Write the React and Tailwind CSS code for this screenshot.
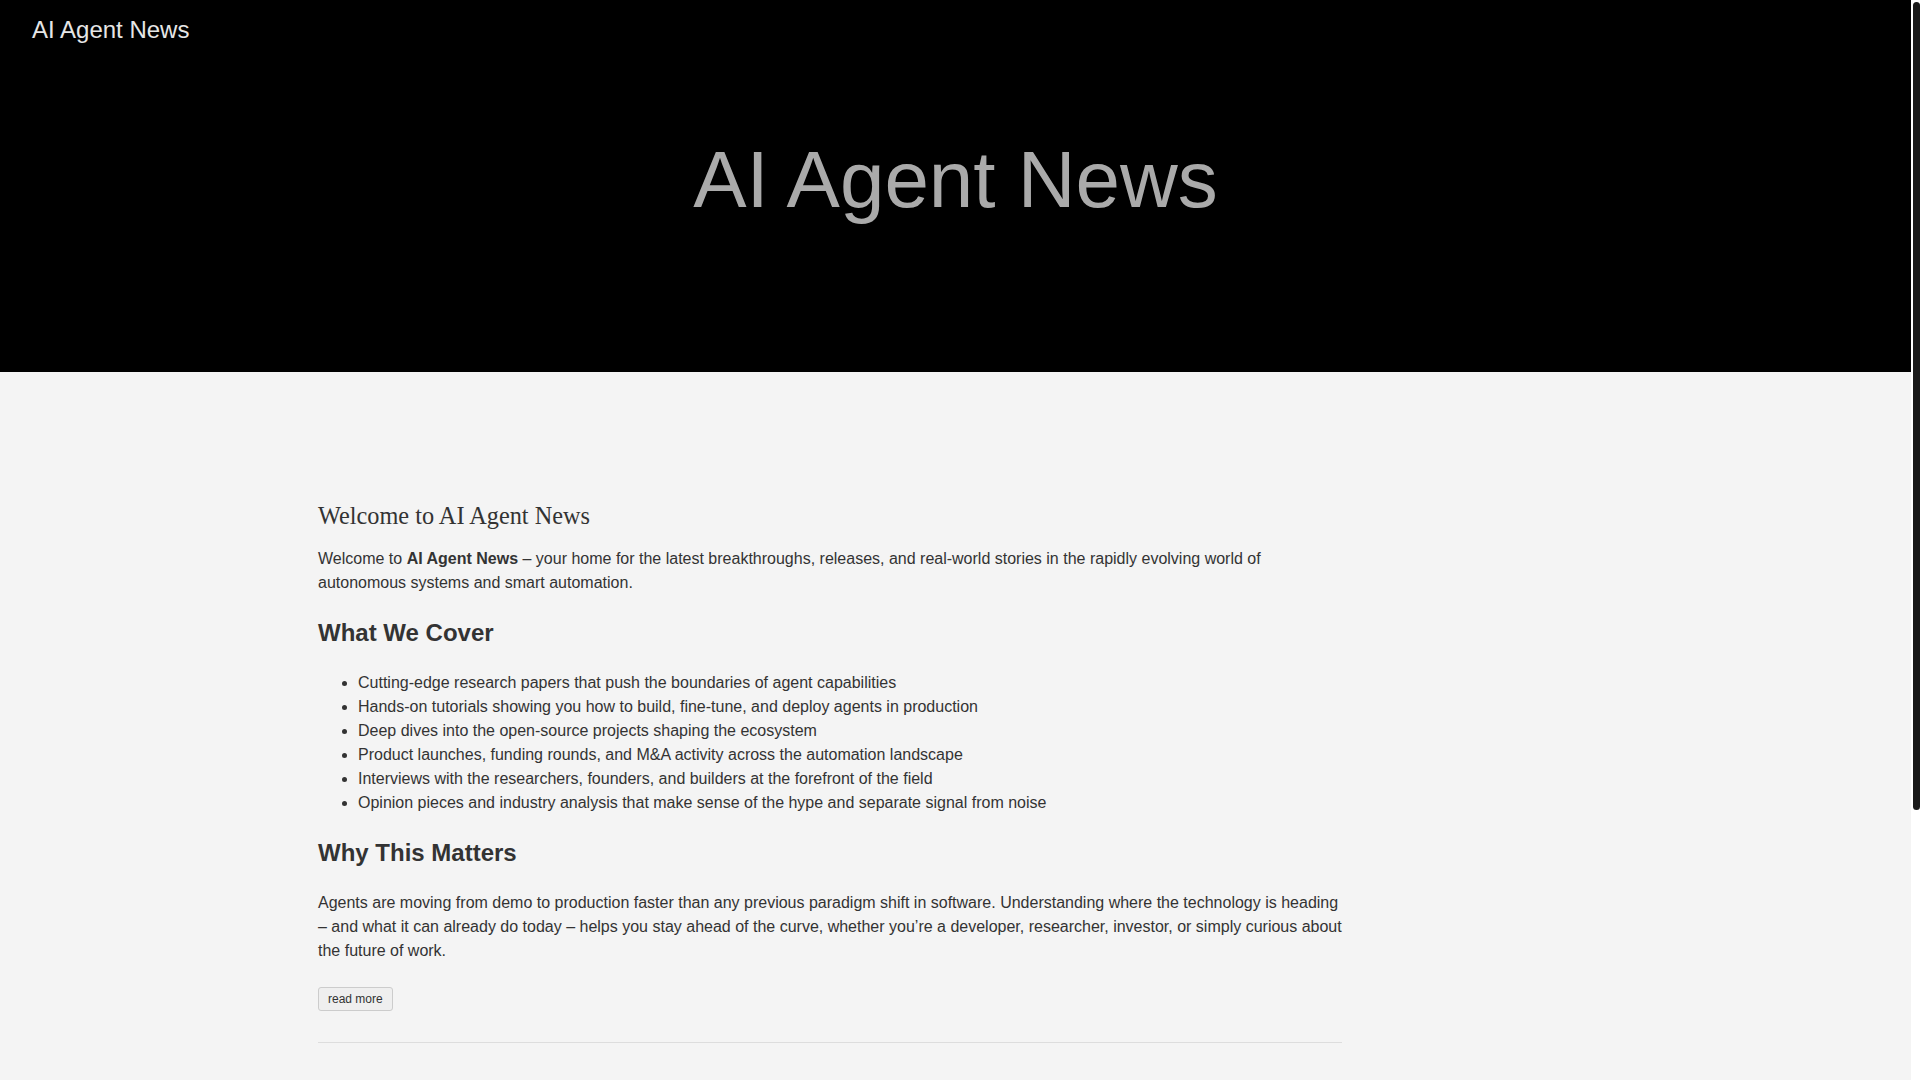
export default function App() {
  const covers = [
    "Cutting-edge research papers that push the boundaries of agent capabilities",
    "Hands-on tutorials showing you how to build, fine-tune, and deploy agents in production",
    "Deep dives into the open-source projects shaping the ecosystem",
    "Product launches, funding rounds, and M&A activity across the automation landscape",
    "Interviews with the researchers, founders, and builders at the forefront of the field",
    "Opinion pieces and industry analysis that make sense of the hype and separate signal from noise",
  ];

  return (
    <div className="flex h-screen font-['Liberation_Sans',Arial,sans-serif] text-[#333]">
      <div className="flex-1 overflow-y-auto bg-[#f4f4f4] [scrollbar-width:none]">
        <header className="h-[372px] bg-black">
          <nav className="px-8 pt-3">
            <a href="#" className="text-[24px] leading-[36px] text-[#e6e6e6]">
              AI Agent News
            </a>
          </nav>
          <h1 className="mt-[88px] text-center text-[80px] leading-[88px] text-[#aaa]">
            AI Agent News
          </h1>
        </header>

        <main className="pl-[318px] pt-[131px] pb-[400px]">
          <article className="w-[1024px]">
            <h3 className="font-['Liberation_Serif','Times_New_Roman',serif] text-[24.3px] leading-[26px] text-[#333]">
              Welcome to AI Agent News
            </h3>
            <p className="mt-[18px] text-[16px] leading-[24px]">
              Welcome to <strong className="font-bold">AI Agent News</strong> – your home for the latest
              breakthroughs, releases, and real-world stories in the rapidly evolving world of autonomous
              systems and smart automation.
            </p>

            <h2 className="mt-[24px] text-[24px] font-bold leading-[28px]">What We Cover</h2>
            <ul className="mt-[24px] list-disc pl-10 text-[16px] leading-[24px]">
              {covers.map((c) => (
                <li key={c}>{c}</li>
              ))}
            </ul>

            <h2 className="mt-[24px] text-[24px] font-bold leading-[28px]">Why This Matters</h2>
            <p className="mt-[24px] text-[16px] leading-[24px]">
              Agents are moving from demo to production faster than any previous paradigm shift in
              software. Understanding where the technology is heading – and what it can already do today –
              helps you stay ahead of the curve, whether you’re a developer, researcher, investor, or
              simply curious about the future of work.
            </p>

            <button className="mt-[24px] h-[24px] rounded-[3px] border border-[#ccc] bg-[#efefef] px-[9px] text-[12px] leading-[20px] text-[#333]">
              read more
            </button>

            <hr className="mt-[31px] border-t border-[#ddd]" />
          </article>
        </main>
      </div>

      {/* scrollbar track as in the screenshot */}
      <div className="w-[9px] shrink-0 bg-white pl-[2px] pt-[2px]">
        <div className="h-[808px] w-[7px] rounded-full bg-[#1a1a1a]" />
      </div>
    </div>
  );
}
